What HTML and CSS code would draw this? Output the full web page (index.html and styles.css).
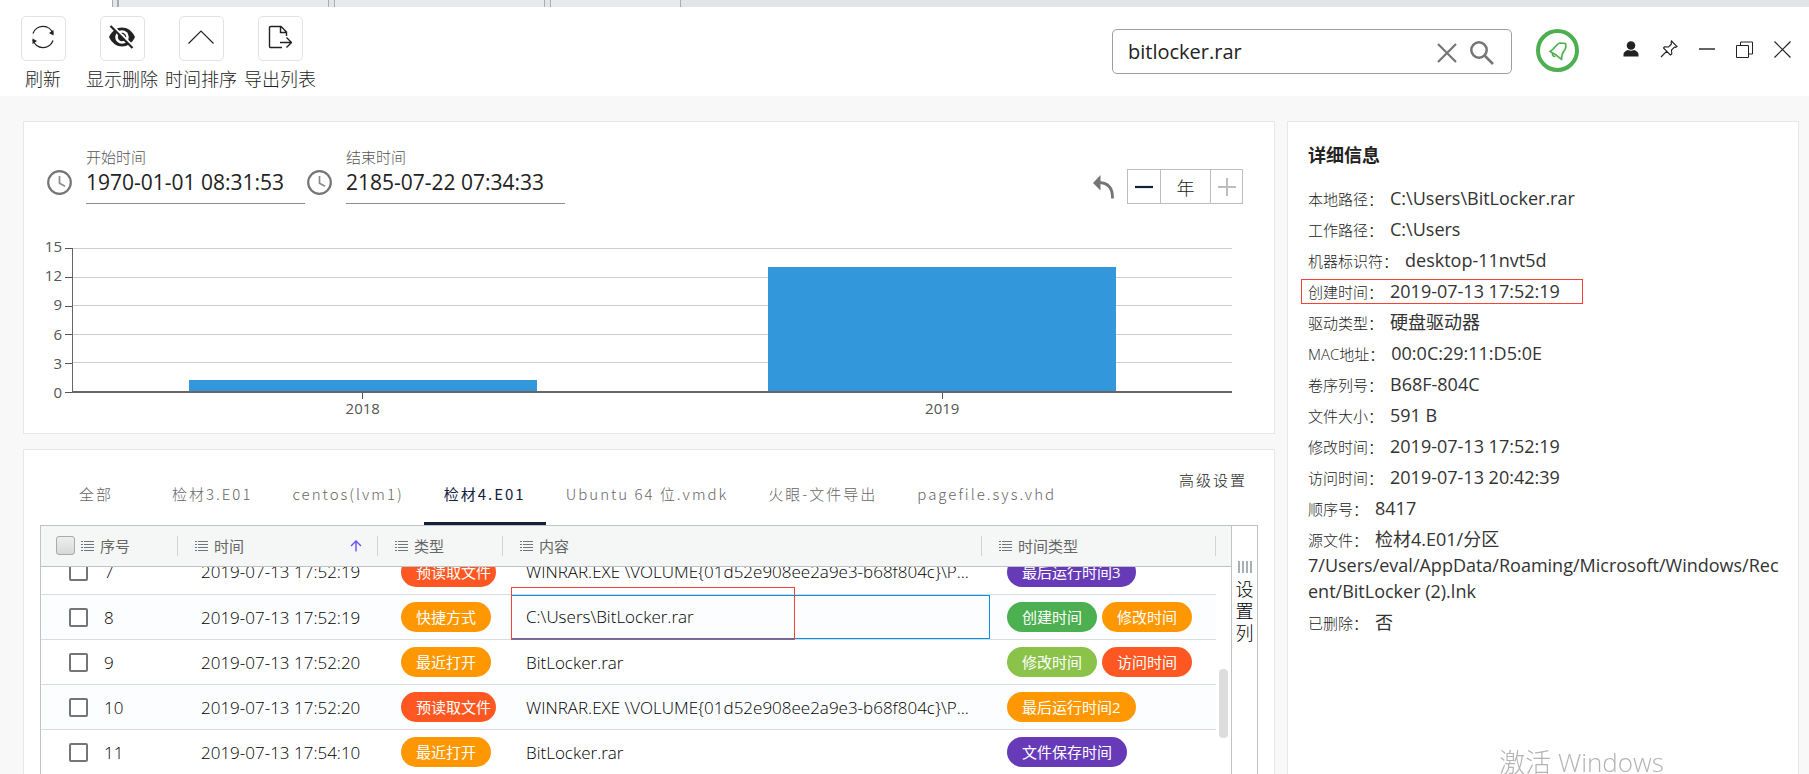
FILE: index.html
```html
<!DOCTYPE html>
<html lang="zh-CN">
<head>
<meta charset="utf-8">
<title>时间线</title>
<link rel="stylesheet" href="styles.css">
</head>
<body>
<svg class="defs" aria-hidden="true">
  <symbol id="list" viewBox="0 0 13 12"><path d="M0 1.5h2M3 1.5h10M0 4.5h2M3 4.5h10M0 7.5h2M3 7.5h10M0 10.5h2M3 10.5h10" stroke="#70757a" stroke-width="1"/></symbol>
  <symbol id="clock" viewBox="0 0 25 25"><circle cx="12.500" cy="12.500" r="11.300" fill="none" stroke="#757575" stroke-width="2.200"/><path d="M12.500 6v7.200l5.500 3" fill="none" stroke="#8a8a8a" stroke-width="1.700"/></symbol>
</svg>
<div class="window-tabs"><i></i><i></i><i></i><i></i></div>
<header class="toolbar">
  <nav class="actions">
    <button class="action"><span class="action-box"><svg width="24" height="24" viewBox="0 0 24 24" fill="none" stroke="#222" stroke-width="1.300"><path d="M2 8.500A10.500 10.500 0 0 1 22 9M22 15.500A10.500 10.500 0 0 1 2 15"/><path d="M22.500 5v5.500l-4.500-2.500zM1.500 19v-5.500l4.500 2.500z" fill="#222" stroke="none"/></svg></span>刷新</button>
    <button class="action"><span class="action-box"><svg width="28" height="24" viewBox="0 0 28 24"><path d="M1 12C4 5.500 9 2.500 14 2.500S24 5.500 27 12C24 18.500 19 21.500 14 21.500S4 18.500 1 12z" fill="#222"/><circle cx="14" cy="12" r="6.800" fill="#fff"/><circle cx="14" cy="12" r="4.200" fill="#222"/><path d="M14 9.500a2.500 2.500 0 0 1 2.500 2.500" stroke="#fff" fill="none"/><path d="M4 0l22 22" stroke="#fff" stroke-width="2"/><path d="M2.500 1l22 22" stroke="#222" stroke-width="2.200"/></svg></span>显示删除</button>
    <button class="action"><span class="action-box"><svg width="26" height="14" viewBox="0 0 26 14" fill="none" stroke="#222" stroke-width="1.200"><path d="M.5 13.500L13 1l12.500 12.500"/></svg></span>时间排序</button>
    <button class="action"><span class="action-box"><svg width="24" height="24" viewBox="0 0 24 24" fill="none" stroke="#222" stroke-width="1.400"><path d="M14 22.500H2.700Q1.500 22.500 1.500 21.300V2.700Q1.500 1.500 2.700 1.500H13l5.500 5.500v4M12.500 2v5.500h5.500M12 17.500h11M18.500 12.500l5 5-5 5"/></svg></span>导出列表</button>
  </nav>
  <div class="search">
    <input type="text" value="bitlocker.rar" aria-label="搜索">
    <button aria-label="清除"><svg width="20" height="20" viewBox="0 0 20 20" stroke="#757575" stroke-width="2.200"><path d="M1 1l18 18M19 1L1 19"/></svg></button>
    <button aria-label="查找"><svg width="24" height="24" viewBox="0 0 24 24" fill="none" stroke="#757575" stroke-width="2.500"><circle cx="9" cy="9" r="7.700"/><path d="M14.500 14.500l8.500 8.500"/></svg></button>
  </div>
  <button class="bell" aria-label="通知"><svg width="20" height="20" viewBox="0 0 20 20" fill="none" stroke="#4caf50" stroke-width="1.700" stroke-linejoin="round"><path d="M2 10.500C7 8 8 2.500 12 2L17.500 2.500Q18.500 7 16 10Q13.500 13 13.500 18.500Q8 13 2 10.500zM4.500 12.500Q4 15.500 7.500 15.500"/></svg></button>
  <div class="window-controls">
    <button aria-label="用户"><svg width="16" height="16" viewBox="0 0 16 16" fill="#222"><circle cx="8" cy="4.500" r="4.300"/><path d="M.5 15.500v-2q0-3 4.500-4.500 3 1.500 6 0 4.500 1.500 4.500 4.500v2z"/></svg></button>
    <button aria-label="固定"><svg width="18" height="18" viewBox="0 0 18 18" fill="none" stroke="#222" stroke-width="1.100"><path d="M11.500 1l5.500 5.500-1.500.8-1-.3-3 3 .3 4-1.500 1L3.500 8l1-1.200 4 .2 3-3-.5-1.300zM6.800 11.200L1 17"/></svg></button>
    <button aria-label="最小化"><svg width="16" height="16" viewBox="0 0 16 16" stroke="#222" stroke-width="1.400"><path d="M0 8h16"/></svg></button>
    <button aria-label="还原"><svg width="17" height="17" viewBox="0 0 17 17" fill="none" stroke="#222"><path d="M.5 4.500h12v12H.5zM4.500 4V1h12v12H13"/></svg></button>
    <button aria-label="关闭"><svg width="17" height="17" viewBox="0 0 17 17" stroke="#222" stroke-width="1.200"><path d="M.5.5l16 16M16.500.5l-16 16"/></svg></button>
  </div>
</header>
<main class="content">
  <div class="left">
    <section class="card timeline">
      <div class="filters">
        <svg class="clock"><use href="#clock"/></svg>
        <label class="field">开始时间<input type="text" value="1970-01-01 08:31:53"></label>
        <svg class="clock"><use href="#clock"/></svg>
        <label class="field">结束时间<input type="text" value="2185-07-22 07:34:33"></label>
        <div class="zoom">
          <button class="undo" aria-label="返回"><svg width="22" height="24" viewBox="0 0 22 24"><path d="M0 8L7.500 0v15.500z" fill="#757575"/><path d="M6 7.500Q20 8 19.500 23.500" fill="none" stroke="#757575" stroke-width="2.800"/></svg></button>
          <div class="stepper">
            <button aria-label="缩小"><svg width="18" height="18"><path d="M0 9h18" stroke="#14213d" stroke-width="2.200"/></svg></button>
            <span>年</span>
            <button aria-label="放大"><svg width="18" height="18"><path d="M0 9h18M9 0v18" stroke="#bdbdbd" stroke-width="2"/></svg></button>
          </div>
        </div>
      </div>
      <div class="chart">
        <div class="y-axis"><span>15</span><span>12</span><span>9</span><span>6</span><span>3</span><span>0</span></div>
        <div class="y-ticks"><i></i><i></i><i></i><i></i><i></i></div>
        <div class="plot">
          <div class="grid-lines"><i></i><i></i><i></i><i></i><i></i></div>
          <div class="bars"><div class="bar" style="height:8%"></div><div class="bar" style="height:87%"></div></div>
        </div>
        <div class="x-axis"><span>2018</span><span>2019</span></div>
      </div>
    </section>
    <section class="card records">
      <div class="tab-bar">
        <nav class="tabs">
          <button>全部</button><button>检材3.E01</button><button>centos(lvm1)</button><button class="active">检材4.E01</button><button>Ubuntu 64 位.vmdk</button><button>火眼-文件导出</button><button>pagefile.sys.vhd</button>
        </nav>
        <button class="advanced">高级设置</button>
      </div>
      <div class="grid">
        <div class="grid-main">
          <table class="grid-head">
            <colgroup><col class="c-no"><col class="c-time"><col class="c-type"><col><col class="c-kind"><col class="c-end"></colgroup>
            <thead><tr>
              <th><div class="th first"><input type="checkbox" class="check-all" aria-label="全选"><svg class="list"><use href="#list"/></svg>序号</div></th>
              <th><div class="th"><svg class="list"><use href="#list"/></svg>时间<svg class="sort" viewBox="0 0 12 12" fill="none" stroke="#6b4dfa" stroke-width="1.400"><path d="M6 11.500V1.500M1 6l5-5 5 5"/></svg></div></th>
              <th><div class="th"><svg class="list"><use href="#list"/></svg>类型</div></th>
              <th><div class="th"><svg class="list"><use href="#list"/></svg>内容</div></th>
              <th><div class="th"><svg class="list"><use href="#list"/></svg>时间类型</div></th>
              <th></th>
            </tr></thead>
          </table>
          <div class="grid-view">
            <div class="grid-body" id="rows">
              <table>
                <colgroup><col class="c-no body"><col class="c-time"><col class="c-type"><col><col class="c-kind body"></colgroup>
                <tbody>
                  <tr><td><label><input type="checkbox">7</label></td><td>2019-07-13 17:52:19</td><td><span class="tag deep">预读取文件</span></td><td class="text">WINRAR.EXE \VOLUME{01d52e908ee2a9e3-b68f804c}\P...</td><td class="kinds"><span class="tag purple">最后运行时间3</span></td></tr>
                  <tr><td><label><input type="checkbox">8</label></td><td>2019-07-13 17:52:19</td><td><span class="tag orange">快捷方式</span></td><td class="focus"><div class="focus-box">C:\Users\BitLocker.rar</div><div class="mark"></div></td><td class="kinds"><span class="tag green">创建时间</span><span class="tag orange">修改时间</span></td></tr>
                  <tr><td><label><input type="checkbox">9</label></td><td>2019-07-13 17:52:20</td><td><span class="tag orange">最近打开</span></td><td class="text">BitLocker.rar</td><td class="kinds"><span class="tag lime">修改时间</span><span class="tag deep">访问时间</span></td></tr>
                  <tr><td><label><input type="checkbox">10</label></td><td>2019-07-13 17:52:20</td><td><span class="tag deep">预读取文件</span></td><td class="text">WINRAR.EXE \VOLUME{01d52e908ee2a9e3-b68f804c}\P...</td><td class="kinds"><span class="tag orange">最后运行时间2</span></td></tr>
                  <tr><td><label><input type="checkbox">11</label></td><td>2019-07-13 17:54:10</td><td><span class="tag orange">最近打开</span></td><td class="text">BitLocker.rar</td><td class="kinds"><span class="tag purple">文件保存时间</span></td></tr>
                </tbody>
              </table>
            </div>
            <div class="track"><div class="thumb"></div></div>
          </div>
        </div>
        <button class="side"><svg width="14" height="12" viewBox="0 0 14 12"><path d="M1 0v12M5 0v12M9 0v12M13 0v12" stroke="#8b989a" stroke-width="1.500"/></svg><span>设置列</span></button>
      </div>
    </section>
  </div>
  <aside class="card details">
    <h2>详细信息</h2>
    <dl>
      <div><dt>本地路径：</dt><dd>C:\Users\BitLocker.rar</dd></div>
      <div><dt>工作路径：</dt><dd>C:\Users</dd></div>
      <div><dt>机器标识符：</dt><dd>desktop-11nvt5d</dd></div>
      <div class="marked"><dt>创建时间：</dt><dd>2019-07-13 17:52:19</dd></div>
      <div><dt>驱动类型：</dt><dd>硬盘驱动器</dd></div>
      <div><dt>MAC地址：</dt><dd>00:0C:29:11:D5:0E</dd></div>
      <div><dt>卷序列号：</dt><dd>B68F-804C</dd></div>
      <div><dt>文件大小：</dt><dd>591 B</dd></div>
      <div><dt>修改时间：</dt><dd>2019-07-13 17:52:19</dd></div>
      <div><dt>访问时间：</dt><dd>2019-07-13 20:42:39</dd></div>
      <div><dt>顺序号：</dt><dd>8417</dd></div>
      <div><dt>源文件：</dt><dd>检材4.E01/分区7/Users/eval/AppData/Roaming/Microsoft/Windows/Recent/BitLocker (2).lnk</dd></div>
      <div><dt>已删除：</dt><dd>否</dd></div>
    </dl>
  </aside>
</main>
<div class="watermark">激活 Windows</div>
<script src="app.js"></script>
</body>
</html>
```
FILE: styles.css
```css
* { box-sizing: border-box; }
body {
  margin: 0;
  height: 100vh;
  display: flex;
  flex-direction: column;
  overflow: hidden;
  background: #f8f8f8;
  color: #222;
  font-family: "Open Sans", "Noto Sans CJK SC", sans-serif;
  font-weight: 300;
  font-size: 17px;
}
button, input { font: inherit; color: inherit; margin: 0; padding: 0; border: 0; background: none; }
button { cursor: pointer; }
svg { display: block; flex: none; }
.defs { position: absolute; width: 0; height: 0; }

.window-tabs { display: flex; height: 7px; flex: none; padding-left: 112px; background: linear-gradient(90deg, #fff 112px, #e3e4e6 112px); }
.window-tabs i { width: 211px; margin-right: 5px; background: #e9eaec; border: solid #aaabad; border-width: 0 1px; }
.window-tabs i:first-child { width: 6px; margin: 0; background: #e3e4e6; }
.window-tabs i:last-child { width: 131px; }

.toolbar { display: flex; height: 89px; flex: none; padding: 9px 18px 0 7px; background: #fff; }
.actions { display: flex; gap: 7px; flex: 1; align-items: flex-start; }
.action { display: flex; flex-direction: column; align-items: center; gap: 5px; width: 72px; font-size: 18px; line-height: 26px; white-space: nowrap; }
.action-box { display: flex; align-items: center; justify-content: center; width: 45px; height: 45px; border: 1px solid #e2e2e2; border-radius: 5px; }
.action-box svg { margin-bottom: 3px; }
.search { display: flex; align-items: center; gap: 13px; width: 400px; height: 45px; margin-top: 13px; padding: 0 17px 0 15px; border: 1px solid #9e9e9e; border-radius: 5px; }
.search input { flex: 1; min-width: 0; font-size: 20px; font-weight: 400; outline: 0; }
.search button { padding-top: 3px; }
.bell { display: flex; align-items: center; justify-content: center; width: 43px; height: 43px; margin: 13px 44px 0 24px; border: 4px solid #4caf50; border-radius: 50%; }
.window-controls { display: flex; align-items: center; gap: 21px; height: 66px; }

.content { display: grid; grid-template-columns: 1252fr 512fr; gap: 12px; flex: 1; min-height: 0; padding: 25px 10px 0 23px; }
.card { background: #fff; border: 1px solid #e7e7e7; }
.left { display: flex; flex-direction: column; gap: 15px; min-height: 0; min-width: 0; }

.timeline { padding: 24px 31px 14px 23px; }
.filters { display: flex; align-items: flex-end; }
.clock { width: 25px; height: 25px; margin: 0 14px 9px 0; }
.field { display: flex; flex-direction: column; width: 219px; margin-right: 2px; border-bottom: 1px solid #8e8e8e; font-size: 15px; line-height: 22px; color: #555; }
.field input { height: 35px; padding-bottom: 7px; font-size: 21px; font-weight: 400; color: #222; outline: 0; width: 100%; }
.zoom { display: flex; align-items: center; gap: 12px; margin-left: auto; }
.stepper { display: grid; grid-template-columns: 32px 50px 32px; height: 35px; border: 1px solid #bdbdbd; }
.stepper > * { display: flex; align-items: center; justify-content: center; font-size: 18px; }
.stepper > * + * { border-left: 1px solid #bdbdbd; }

.chart { display: grid; grid-template-columns: 15px 11px 1fr; grid-template-rows: 145px 26px; padding: 44px 11px 0 0; font-size: 15px; font-weight: 400; color: #555; }
.y-axis { display: flex; flex-direction: column; justify-content: space-between; margin: -11px 0 -8px; line-height: 18px; align-items: flex-end; }
.y-ticks { display: flex; flex-direction: column; width: 8px; justify-self: end; border-right: 1px solid #666; }
.y-ticks i { flex: 1; border-top: 1px solid #555; }
.y-ticks i:last-child { border-bottom: 1px solid #555; }
.plot { position: relative; border-bottom: 2px solid #666; }
.grid-lines { display: flex; flex-direction: column; height: 100%; }
.grid-lines i { flex: 1; border-top: 1px solid #ccc; }
.bars { position: absolute; inset: 0; display: flex; align-items: flex-end; justify-content: space-around; }
.bar { width: 30%; background: #3297db; }
.x-axis { grid-column: 3; display: flex; justify-content: space-around; text-align: center; line-height: 18px; }
.x-axis span::before { content: ""; display: block; width: 1px; height: 6px; margin: 0 auto; background: #555; }

.records { flex: 1; min-height: 0; display: flex; flex-direction: column; padding: 15px 16px 0; border-bottom: 0; }
.tab-bar { display: flex; height: 60px; flex: none; padding-right: 11px; justify-content: space-between; align-items: flex-start; }
.tabs { display: flex; height: 60px; }
.tabs button { min-width: 112px; padding: 0 20px; border-bottom: 3px solid transparent; font-family: "Noto Sans CJK SC", sans-serif; font-size: 15px; letter-spacing: 2px; color: #666; white-space: nowrap; }
.tabs .active { border-color: #14213d; color: #14213d; font-weight: 400; }
.advanced { font-size: 15px; line-height: 30px; letter-spacing: 2px; }
.grid { flex: 1; min-height: 0; display: flex; border: 1px solid #bdc3c7; border-bottom: 0; }
.grid-main { flex: 1; min-width: 0; display: flex; flex-direction: column; }
table { width: 100%; table-layout: fixed; border-collapse: collapse; }
th, td { padding: 0; text-align: left; font-weight: inherit; }
.c-no { width: 137px; }
.c-no.body { width: 145px; }
.c-time { width: 200px; }
.c-type { width: 125px; }
.c-kind { width: 234px; }
.c-kind.body { width: 226px; }
.c-end { width: 15px; }
.grid-head { background: #f5f7f7; border-bottom: 1px solid #bdc3c7; }
.grid-head th { height: 40px; font-size: 15px; color: #666; font-weight: 400; }
.th { display: flex; align-items: center; gap: 6px; height: 20px; padding: 0 15px 0 17px; border-right: 1px solid #d0d4d6; white-space: nowrap; }
.th.first { padding-left: 15px; }
.list { width: 13px; height: 12px; }
.sort { width: 12px; height: 12px; margin-left: auto; }
.check-all { appearance: none; width: 19px; height: 19px; border: 1px solid #aaa; border-radius: 3px; background: linear-gradient(#eee, #d8d8d8); }
.grid-view { flex: 1; min-height: 0; display: flex; }
.grid-body { flex: 1; min-width: 0; overflow: hidden; }
.grid-body::after { content: ""; display: block; height: 45px; }
.grid-body tr { color: #000; background: #fff; }
.grid-body tr:nth-child(even) { background: #fcfdfe; }
.grid-body td { height: 45px; padding-left: 15px; border-bottom: 1px solid #d9dcde; white-space: nowrap; }
.grid-body td:first-child { padding-left: 28px; }
.grid-body label { display: flex; align-items: center; gap: 16px; }
.grid-body input { appearance: none; width: 19px; height: 19px; border: 2px solid #757575; border-radius: 2px; background: #fff; }
.grid-body .text { overflow: hidden; }
.grid-body .focus { position: relative; padding: 0; }
.focus-box { height: 44px; padding-left: 14px; border: 1px solid #0091ea; line-height: 42px; }
.mark { position: absolute; inset: -8px auto -1px 0; width: 284px; border: 1px solid #f44336; z-index: 1; }
.grid-body .kinds { padding-left: 17px; overflow: hidden; }
.tag { display: inline-block; height: 30px; margin-right: 5px; padding: 0 15px; border-radius: 15px; overflow: hidden; color: #fff; font-size: 15px; line-height: 30px; font-weight: 400; vertical-align: middle; }
td:nth-child(3) .tag { max-width: 95px; margin: 0; }
.orange { background: #ff9800; }
.deep { background: #ff5722; }
.green { background: #4caf50; }
.lime { background: #8bc34a; }
.purple { background: #673ab7; }
.track { width: 15px; padding: 102px 3px 0; }
.thumb { height: 69px; border-radius: 4px; background: #ddd; }
.side { width: 26px; display: flex; flex-direction: column; align-items: center; gap: 5px; padding-top: 35px; border-left: 1px solid #bdc3c7; font-size: 18px; line-height: 22px; color: #000; }
.side span { width: 18px; }

.details { padding: 20px 10px 0 20px; border-bottom: 0; overflow: hidden; }
h2 { margin: 0 0 17px; font-size: 18px; line-height: 26px; font-weight: 700; }
dl { margin: 0; font-size: 18px; }
dl div { margin-bottom: 5px; line-height: 26px; overflow-wrap: anywhere; }
dt, dd { display: inline; margin: 0; }
dt { margin-right: 7px; font-size: 15px; line-height: 20px; }
dd { font-weight: 400; color: #333; }
.marked { position: relative; }
.marked::after { content: ""; position: absolute; inset: 1px auto 0 -7px; width: 280px; border: 1px solid #f44336; }
.watermark { position: fixed; right: 145px; bottom: -6px; font-size: 26px; line-height: 36px; color: #b4b4b4; }
```
FILE: app.js
```js
document.getElementById("rows").scrollTop = 17;
```
